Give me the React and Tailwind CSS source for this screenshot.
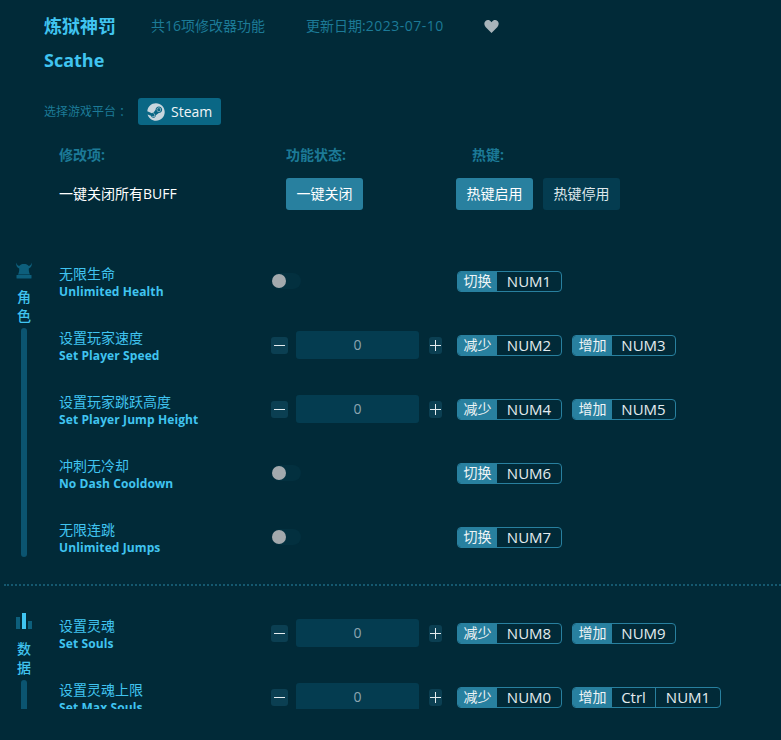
import React from "react";
import { FaSteam } from "react-icons/fa";

function Toggle() {
  return (
    <div className="w-[29px] h-4 rounded-full bg-[#03303f] flex items-center">
      <div className="w-[14px] h-[14px] rounded-full bg-[#a3a9ad]" />
    </div>
  );
}

function Stepper() {
  return (
    <div className="flex items-center">
      <div className="w-[17px] h-[17px] rounded-[3px] bg-[#0b3f52] flex items-center justify-center">
        <div className="w-[11px] h-px bg-[#e4ecef]" />
      </div>
      <div className="ml-2 w-[123px] h-7 rounded-[3px] bg-[#043c50] flex items-center justify-center text-sm text-[#8da6b1]">0</div>
      <div className="ml-[10px] w-[13px] h-[17px] rounded-[3px] bg-[#0b3f52] flex items-center justify-center text-[#dfe8ec] relative">
        <div className="w-[11px] h-px bg-[#e4ecef]" />
        <div className="absolute w-px h-[11px] bg-[#e4ecef]" />
      </div>
    </div>
  );
}

function Hotkey({ label, keys }) {
  return (
    <div className="flex h-[21px] rounded-[4px] border border-[#28809f] overflow-hidden text-[15px] leading-none">
      <div className="w-[39px] bg-[#28809f] text-[#eef4f6] flex items-center justify-center text-sm">{label}</div>
      {keys.map((k) => (
        <div key={k} className={"flex items-center justify-center text-[#e4ecef] " + (k === "Ctrl" ? "w-[44px] border-r border-[#28809f]" : label === "增加" && keys.length === 1 ? "w-[63px]" : "w-[64px]")}>{k}</div>
      ))}
    </div>
  );
}

function Row({ zh, en, stepper, hotkeys }) {
  return (
    <div className="h-16 flex items-center shrink-0">
      <div className="w-[212px] pt-[3px]">
        <div className="text-sm leading-[17px] text-[#40c4f0]">{zh}</div>
        <div className="mt-px text-xs leading-[17px] font-bold tracking-[0.1px] text-[#40c4f0] whitespace-nowrap">{en}</div>
      </div>
      <div className="w-[186px] flex">{stepper ? <Stepper /> : <div className="ml-px"><Toggle /></div>}</div>
      <div className="flex gap-[10px]">
        {hotkeys.map(([l, k]) => <Hotkey key={l} label={l} keys={k} />)}
      </div>
    </div>
  );
}

function Helmet() {
  return (
    <svg width="16" height="17" viewBox="0 0 16 17" fill="#0d5f7c">
      <path d="M0.500 0.500c.2 1.800 1 3 2.700 3.600C4 2.600 5.800 2 8 2s4 .6 4.800 2.100c1.700-.6 2.500-1.800 2.700-3.600.8 2.800-.2 5-2.700 5.900-.1 2.500.2 4.500 1.200 6.100H2c1-1.600 1.300-3.600 1.200-6.100C.7 5.500-.3 3.300 .5 .5z" />
      <rect x="0.500" y="13" width="15" height="3.500" rx=".5" />
    </svg>
  );
}

function Bars() {
  return (
    <svg width="16" height="17" viewBox="0 0 16 17">
      <rect x="0" y="4" width="4" height="12" fill="#0d5f7c" />
      <rect x="6" y="0" width="4" height="16" fill="#40c4f0" />
      <rect x="12" y="8" width="4" height="8" fill="#0d5f7c" />
    </svg>
  );
}

function Section({ icon, a, b, children, className, iconClass, barClass }) {
  return (
    <div className={"flex " + className}>
      <div className={"w-[59px] shrink-0 pl-[4px] flex flex-col items-center pr-[15px] " + barClass}>
        <div className={"h-[17px] flex items-center " + iconClass}>{icon}</div>
        <div className="text-sm leading-[19px] font-medium text-[#40c4f0]">{a}</div>
        <div className="text-sm leading-[19px] font-medium text-[#40c4f0]">{b}</div>
        <div className="mt-[3px] w-[6px] flex-1 rounded-full bg-[#0b5470]" />
      </div>
      <div className="flex-1 flex flex-col">{children}</div>
    </div>
  );
}

export default function App() {
  return (
    <div className="w-[781px] h-[740px] bg-[#012a38] overflow-hidden" style={{ fontFamily: '"Open Sans","Noto Sans CJK SC",sans-serif' }}>
      <div className="h-[249px] pl-11 pt-[13px]">
        <div className="flex items-center h-[26px]">
          <div className="text-lg font-bold text-[#40c4f0] w-[107px] whitespace-nowrap">炼狱神罚</div>
          <div className="text-sm text-[#1c7a97] w-[155px] whitespace-nowrap">共16项修改器功能</div>
          <div className="text-sm text-[#1c7a97] w-[178px] whitespace-nowrap">更新日期:<span className="tracking-[0.5px]">2023-07-10</span></div>
          <svg width="15" height="15" viewBox="0 0 24 22" fill="#a8b4ba"><path d="M12 21.500 2.500 11.600C-.2 8.700-.1 4.500 2.500 2.200 5-.1 9 .2 12 4c3-3.800 7-4.100 9.500-1.800 2.600 2.300 2.700 6.500 0 9.400z" /></svg>
        </div>
        <div className="mt-2 text-lg font-bold leading-[26px] text-[#40c4f0]">Scathe</div>
        <div className="mt-[25px] flex items-center h-[27px]">
          <div className="text-xs text-[#1c7a97] w-[94px] whitespace-nowrap">选择游戏平台<span className="ml-[3px]">：</span></div>
          <div className="w-[83px] h-[27px] rounded-[3px] bg-[#0a6785] flex items-center pl-[9px] gap-[6px] text-sm text-[#f0f5f7]">
            <FaSteam className="text-[18px] text-[#c8d6de]" />
            Steam
          </div>
        </div>
        <div className="mt-[21px] ml-[15px] flex h-[18px] items-center text-sm font-bold text-[#1c7a97]">
          <div className="w-[227px]">修改项:</div>
          <div className="w-[186px]">功能状态:</div>
          <div>热键:</div>
        </div>
        <div className="mt-[14px] ml-[15px] flex items-center">
          <div className="w-[227px] text-sm text-white">一键关闭所有BUFF</div>
          <div className="w-[170px]">
            <div className="w-[77px] h-8 rounded-[3px] bg-[#28809f] text-sm text-white flex items-center justify-center">一键关闭</div>
          </div>
          <div className="flex gap-[10px]">
            <div className="w-[77px] h-8 rounded-[3px] bg-[#28809f] text-sm text-white flex items-center justify-center">热键启用</div>
            <div className="w-[77px] h-8 rounded-[3px] bg-[#043c50] text-sm text-[#dfe8ec] flex items-center justify-center">热键停用</div>
          </div>
        </div>
      </div>
      <div className="h-[460px] overflow-hidden">
        <Section icon={<Helmet />} a="角" b="色" className="" iconClass="mt-[13px] mb-2" barClass="pb-3">
          <Row zh="无限生命" en="Unlimited Health" hotkeys={[["切换", ["NUM1"]]]} />
          <Row zh="设置玩家速度" en="Set Player Speed" stepper hotkeys={[["减少", ["NUM2"]], ["增加", ["NUM3"]]]} />
          <Row zh="设置玩家跳跃高度" en="Set Player Jump Height" stepper hotkeys={[["减少", ["NUM4"]], ["增加", ["NUM5"]]]} />
          <Row zh="冲刺无冷却" en="No Dash Cooldown" hotkeys={[["切换", ["NUM6"]]]} />
          <Row zh="无限连跳" en="Unlimited Jumps" hotkeys={[["切换", ["NUM7"]]]} />
        </Section>
        <div className="mt-[15px] ml-[4px] border-t-2 border-dotted border-[#14586f]" />
        <Section icon={<Bars />} a="数" b="据" className="pt-[15px] h-[200px]" iconClass="mt-3 mb-[9px]" barClass="">
          <Row zh="设置灵魂" en="Set Souls" stepper hotkeys={[["减少", ["NUM8"]], ["增加", ["NUM9"]]]} />
          <Row zh="设置灵魂上限" en="Set Max Souls" stepper hotkeys={[["减少", ["NUM0"]], ["增加", ["Ctrl", "NUM1"]]]} />
        </Section>
      </div>
    </div>
  );
}
